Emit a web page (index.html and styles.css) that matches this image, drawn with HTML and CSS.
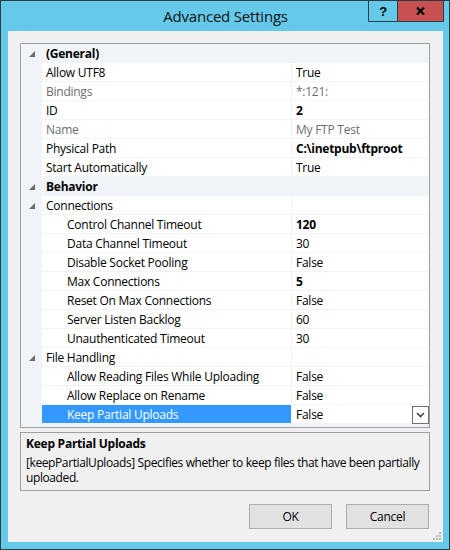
FILE: index.html
```html
<!DOCTYPE html>
<html>
<head>
<meta charset="utf-8">
<link rel="stylesheet" href="styles.css">
</head>
<body>
<div class="window">
  <div class="titlebar"><span class="title">Advanced Settings</span></div>
  <div class="caption">
    <div class="cbtn help">?</div>
    <div class="cbtn close"><svg width="9" height="8" viewBox="0 0 9 8"><path d="M1 0.5 L8 7.5 M8 0.5 L1 7.5" stroke="#000" stroke-width="2.2" fill="none"/></svg></div>
  </div>
  <div class="client">
    <div class="grid">
      <div class="row cat"><div class="gut"><span class="tri"></span></div><div class="name">(General)</div></div>
      <div class="row"><div class="gut"></div><div class="name">Allow UTF8</div><div class="val">True</div></div>
      <div class="row ro"><div class="gut"></div><div class="name">Bindings</div><div class="val">*:121:</div></div>
      <div class="row"><div class="gut"></div><div class="name">ID</div><div class="val b">2</div></div>
      <div class="row ro"><div class="gut"></div><div class="name">Name</div><div class="val">My FTP Test</div></div>
      <div class="row"><div class="gut"></div><div class="name">Physical Path</div><div class="val b">C:\inetpub\ftproot</div></div>
      <div class="row"><div class="gut"></div><div class="name">Start Automatically</div><div class="val">True</div></div>
      <div class="row cat"><div class="gut"><span class="tri"></span></div><div class="name">Behavior</div></div>
      <div class="row"><div class="gut"><span class="tri"></span></div><div class="name">Connections</div><div class="val"></div></div>
      <div class="row sub"><div class="gut"></div><div class="name">Control Channel Timeout</div><div class="val b">120</div></div>
      <div class="row sub"><div class="gut"></div><div class="name">Data Channel Timeout</div><div class="val">30</div></div>
      <div class="row sub"><div class="gut"></div><div class="name">Disable Socket Pooling</div><div class="val">False</div></div>
      <div class="row sub"><div class="gut"></div><div class="name">Max Connections</div><div class="val b">5</div></div>
      <div class="row sub"><div class="gut"></div><div class="name">Reset On Max Connections</div><div class="val">False</div></div>
      <div class="row sub"><div class="gut"></div><div class="name">Server Listen Backlog</div><div class="val">60</div></div>
      <div class="row sub"><div class="gut"></div><div class="name">Unauthenticated Timeout</div><div class="val">30</div></div>
      <div class="row"><div class="gut"><span class="tri"></span></div><div class="name">File Handling</div><div class="val"></div></div>
      <div class="row sub"><div class="gut"></div><div class="name">Allow Reading Files While Uploading</div><div class="val">False</div></div>
      <div class="row sub"><div class="gut"></div><div class="name">Allow Replace on Rename</div><div class="val">False</div></div>
      <div class="row sub sel"><div class="gut"></div><div class="name">Keep Partial Uploads</div><div class="val">False<span class="dd"><svg width="9" height="6" viewBox="0 0 9 6"><path d="M1 1 L4.5 4.5 L8 1" stroke="#444" stroke-width="1.6" fill="none"/></svg></span></div></div>
    </div>
    <div class="desc">
      <div class="desc-title">Keep Partial Uploads</div>
      <div class="desc-text">[keepPartialUploads] Specifies whether to keep files that have been partially uploaded.</div>
    </div>
    <div class="buttons">
      <div class="btn">OK</div>
      <div class="btn">Cancel</div>
    </div>
    <div class="gripwrap"><svg class="grip" width="8" height="8" viewBox="0 0 8 8">
      <rect x="6" y="0" width="2" height="2" fill="#b8b8b8"/>
      <rect x="3" y="3" width="2" height="2" fill="#b8b8b8"/><rect x="6" y="3" width="2" height="2" fill="#b8b8b8"/>
      <rect x="0" y="6" width="2" height="2" fill="#b8b8b8"/><rect x="3" y="6" width="2" height="2" fill="#b8b8b8"/><rect x="6" y="6" width="2" height="2" fill="#b8b8b8"/>
    </svg></div>
  </div>
</div>
</body>
</html>
```
FILE: styles.css
```css
* { box-sizing: border-box; }
html, body { margin: 0; padding: 0; }
body {
  font-family: "Open Sans", "Noto Sans", sans-serif;
  font-size: 12px;
  letter-spacing: -0.25px;
  color: #000;
  background: #fff;
}
.window {
  position: relative;
  width: 450px;
  height: 550px;
  border: 1px solid #2e3d45;
  background: #65c9ea;
  padding: 0 6px 7px 7px;
  display: flex;
  flex-direction: column;
}
.titlebar {
  height: 30px;
  display: flex;
  align-items: center;
  justify-content: center;
  padding-bottom: 1px;
}
.title {
  font-size: 15px;
  letter-spacing: -0.2px;
  color: #111;
}
.caption {
  position: absolute;
  top: -1px;
  right: 5px;
  display: flex;
}
.cbtn {
  height: 22px;
  border: 1px solid #2e3d45;
  display: flex;
  align-items: center;
  justify-content: center;
}
.help {
  width: 29px;
  border-right: none;
  font-weight: bold;
  font-size: 13px;
  font-family: "Liberation Sans", sans-serif;
}
.close {
  width: 47px;
  background: #c75050;
}
.client {
  flex: 1;
  background: #f0f0f0;
  padding: 12px 13px 0 12px;
  display: flex;
  flex-direction: column;
}
.grid {
  height: 385px;
  border: 1px solid #a0a0a0;
  background: #f0f4f9;
  padding-bottom: 3px;
}
.row {
  height: 19px;
  display: flex;
  padding-bottom: 1px;
}
.gut {
  width: 21px;
  flex: none;
  position: relative;
}
.tri {
  position: absolute;
  left: 8px;
  top: 7px;
  width: 0;
  height: 0;
  border-left: 6px solid transparent;
  border-bottom: 6px solid #6a6a6a;
}
.name {
  width: 249px;
  flex: none;
  background: #fff;
  padding-left: 4px;
  padding-top: 1px;
  line-height: 17px;
  white-space: nowrap;
  overflow: hidden;
}
.val {
  flex: 1;
  margin-left: 1px;
  background: #fff;
  padding-left: 4px;
  padding-top: 1px;
  line-height: 17px;
  white-space: nowrap;
  position: relative;
}
.cat .name {
  background: transparent;
  font-weight: bold;
  width: auto;
}
.ro .name, .ro .val { color: #6d6d6d; }
.val.b { font-weight: bold; }
.sub .name { padding-left: 25px; }
.sel .name { background: #3399ff; color: #fff; }
.dd {
  position: absolute;
  right: 0;
  top: 1px;
  width: 17px;
  height: 18px;
  border: 1px solid #707070;
  background: #fff;
  display: flex;
  align-items: center;
  justify-content: center;
}
.desc {
  margin-top: 4px;
  height: 59px;
  border: 1px solid #a0a0a0;
  padding: 3px 2px 0 5px;
  line-height: 16px;
}
.desc-title { font-weight: bold; margin-bottom: 3px; }
.desc-text { line-height: 15px; letter-spacing: -0.4px; }
.buttons {
  margin-top: 13px;
  display: flex;
  justify-content: flex-end;
  gap: 14px;
  padding-right: 1px;
}
.btn {
  width: 83px;
  height: 25px;
  background: #e1e1e1;
  border: 1px solid #adadad;
  display: flex;
  align-items: center;
  justify-content: center;
}
.gripwrap {
  flex: 1;
  display: flex;
  justify-content: flex-end;
  align-items: flex-end;
  margin-right: -11px;
  padding-bottom: 2px;
}
```
